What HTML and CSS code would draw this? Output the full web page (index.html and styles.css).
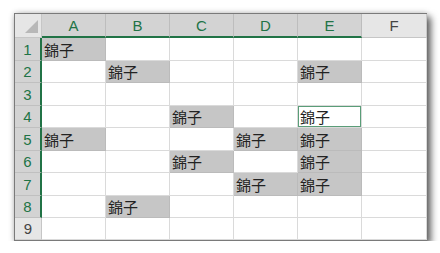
FILE: index.html
```html
<!DOCTYPE html>
<html lang="zh-Hant">
<head>
    <meta charset="UTF-8">
    <title>錦子</title>
    <link rel="stylesheet" href="styles.css">
</head>
<body>
    <div class="sheet">
        <div class="corner"><span class="tri"></span></div>
        <div class="col-head on">A</div>
        <div class="col-head on">B</div>
        <div class="col-head on">C</div>
        <div class="col-head on">D</div>
        <div class="col-head on">E</div>
        <div class="col-head">F</div>

        <div class="row-head on">1</div>
        <div class="cell sel">錦子</div><div class="cell"></div><div class="cell"></div><div class="cell"></div><div class="cell"></div><div class="cell"></div>

        <div class="row-head on">2</div>
        <div class="cell"></div><div class="cell sel">錦子</div><div class="cell"></div><div class="cell"></div><div class="cell sel">錦子</div><div class="cell"></div>

        <div class="row-head on">3</div>
        <div class="cell"></div><div class="cell"></div><div class="cell"></div><div class="cell"></div><div class="cell"></div><div class="cell"></div>

        <div class="row-head on">4</div>
        <div class="cell"></div><div class="cell"></div><div class="cell sel">錦子</div><div class="cell"></div><div class="cell active">錦子</div><div class="cell"></div>

        <div class="row-head on">5</div>
        <div class="cell sel">錦子</div><div class="cell"></div><div class="cell"></div><div class="cell sel">錦子</div><div class="cell sel">錦子</div><div class="cell"></div>

        <div class="row-head on">6</div>
        <div class="cell"></div><div class="cell"></div><div class="cell sel">錦子</div><div class="cell"></div><div class="cell sel">錦子</div><div class="cell"></div>

        <div class="row-head on">7</div>
        <div class="cell"></div><div class="cell"></div><div class="cell"></div><div class="cell sel">錦子</div><div class="cell sel">錦子</div><div class="cell"></div>

        <div class="row-head on">8</div>
        <div class="cell"></div><div class="cell sel">錦子</div><div class="cell"></div><div class="cell"></div><div class="cell"></div><div class="cell"></div>

        <div class="row-head">9</div>
        <div class="cell"></div><div class="cell"></div><div class="cell"></div><div class="cell"></div><div class="cell"></div><div class="cell"></div>
    </div>
</body>
</html>
```

FILE: styles.css
```css
* {
    margin: 0;
    padding: 0;
    box-sizing: border-box;
}

body {
    background: #fff;
    padding: 13px 0 0 14px;
    font-family: "Liberation Sans", sans-serif;
}

.sheet {
    display: grid;
    grid-template-columns: 27px repeat(5, 64px) 65px;
    grid-template-rows: 24px 23px 22px 23px 22px 23px 22px 23px 22px 22px;
    width: 413px;
    border: 1px solid #7a7a7a;
    background: #fff;
    box-shadow: 4px 4px 7px rgba(0, 0, 0, 0.6), 0 0 6px rgba(0, 0, 0, 0.2);
}

.corner {
    background: #e6e6e6;
    border-right: 1px solid #c6c6c6;
    border-bottom: 1px solid #c6c6c6;
    display: flex;
    justify-content: flex-end;
    align-items: flex-end;
    padding: 0 3px 4px 0;
}

.tri {
    width: 0;
    height: 0;
    border-left: 13px solid transparent;
    border-bottom: 13px solid #b8b8b8;
}

.col-head {
    background: #e6e6e6;
    border-right: 1px solid #c8c8c8;
    border-bottom: 1px solid #c6c6c6;
    color: #444;
    font-size: 15px;
    display: flex;
    justify-content: center;
    align-items: center;
}

.col-head.on {
    background: #d3d3d3;
    border-right-color: #bdbdbd;
    border-bottom: 2px solid #217346;
    color: #217346;
    padding-top: 1px;
}

.row-head {
    background: #e6e6e6;
    border-right: 1px solid #c6c6c6;
    border-bottom: 1px solid #cfcfcf;
    color: #444;
    font-size: 15px;
    display: flex;
    justify-content: center;
    align-items: center;
}

.row-head.on {
    background: #d3d3d3;
    border-right: 2px solid #217346;
    border-bottom-color: #c0c0c0;
    color: #217346;
}

.cell {
    border-right: 1px solid #dadada;
    border-bottom: 1px solid #dadada;
    font-family: "Noto Sans CJK TC", sans-serif;
    font-size: 15px;
    color: #222;
    line-height: 20px;
    padding-left: 2px;
    display: flex;
    align-items: flex-end;
}

.cell.sel {
    background: #c6c6c6;
    border-color: #bbbbbb;
}

.cell.active {
    background: #fff;
    box-shadow: inset 0 0 0 1px #5a9d78;
}
```
